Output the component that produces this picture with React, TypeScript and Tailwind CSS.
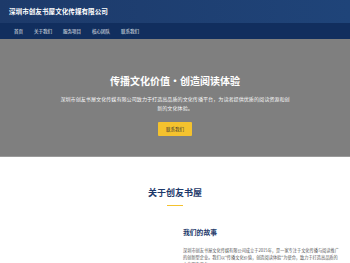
const navItems = ["首页", "关于我们", "服务项目", "核心团队", "联系我们"];

export default function App() {
  return (
    <div
      className="min-h-screen bg-white"
      style={{ fontFamily: '"Noto Sans CJK SC", "Noto Sans", sans-serif' }}
    >
      {/* Header */}
      <header className="bg-gradient-to-r from-[#1d3a6a] to-[#1f4479] text-white">
        <div className="h-[23px] flex items-center px-[9px]">
          <h1 className="text-[6.6px] font-bold leading-none">深圳市创友书屋文化传媒有限公司</h1>
        </div>
        <nav className="h-[16px] bg-[#112e5e] flex items-center pl-[14px] gap-[10px]">
          {navItems.map((item) => (
            <a key={item} className="text-[4.5px] leading-none text-white/90 mr-[1px]">
              {item}
            </a>
          ))}
        </nav>
      </header>

      {/* Hero */}
      <section className="h-[118px] bg-[#7f7f7f] border-b border-[#9a9a9a] flex flex-col items-center pt-[37px] text-white">
        <h2 className="text-[10px] font-bold leading-none">传播文化价值・创造阅读体验</h2>
        <p className="mt-[9px] w-[232px] text-center text-[5.1px] leading-[8.5px] text-white/95">
          深圳市创友书屋文化传媒有限公司致力于打造高品质的文化传播平台，为读者提供优质的阅读资源和创新的文化体验。
        </p>
        <button className="mt-[10px] w-[34px] h-[14px] bg-[#f4c22e] text-[#333] text-[4.5px] leading-none rounded-[1px]">
          联系我们
        </button>
      </section>

      {/* About */}
      <section className="flex flex-col items-center pt-[31px]">
        <h2 className="text-[9px] font-bold leading-none text-[#1e3a6b]">关于创友书屋</h2>
        <div className="mt-[8px] w-[16px] h-[1px] bg-[#f4c22e]" />
        <div className="w-full grid grid-cols-2 gap-[16px] px-[10px] mt-[23px]">
          <div />
          <div>
            <h3 className="text-[6.8px] font-bold leading-none text-[#1e3a6b]">我们的故事</h3>
            <p className="mt-[11px] text-[4.2px] leading-[7.2px] text-[#555]">
              深圳市创友书屋文化传媒有限公司成立于2015年，是一家专注于文化传播与阅读推广的创新型企业。我们以"传播文化价值，创造阅读体验"为使命，致力于打造高品质的文化服务平台。
            </p>
          </div>
        </div>
      </section>
    </div>
  );
}
